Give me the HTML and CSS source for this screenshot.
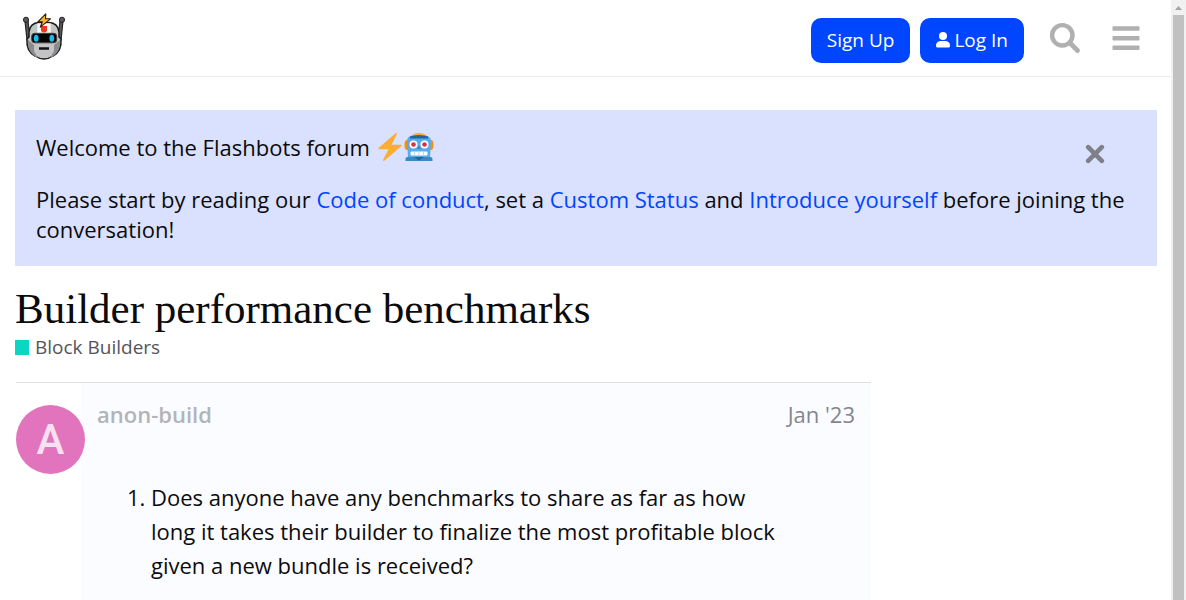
FILE: index.html
```
<!DOCTYPE html>
<html lang="en">
<head>
<meta charset="utf-8">
<meta name="viewport" content="width=device-width, initial-scale=1">
<title>Builder performance benchmarks - Flashbots</title>
<link rel="stylesheet" href="styles.css">
</head>
<body>
<div class="viewport">
  <div class="page">
    <header class="site-header">
      <a class="logo" href="#" aria-label="Flashbots home">
        <svg viewBox="0 0 44 52" width="44" height="52">
          <path d="M3 9h3l1 9 3-1v12l-3 1-2-2zM41 9h-3l-1 9-3-1v12l3 1 2-2z" fill="#5a5a5c" stroke="#222" stroke-width="1.200" stroke-linejoin="round"/>
          <circle cx="4" cy="7.800" r="2.600" fill="#5a5a5c" stroke="#222"/>
          <circle cx="40" cy="7.800" r="2.600" fill="#5a5a5c" stroke="#222"/>
          <path d="M7 20Q8 11 17 10.500h10Q36 11 37 20v5l2 2q1 12-8 17-9 6-18 0-9-5-8-17l2-2z" fill="#c4c4c6" stroke="#1c1c1c" stroke-width="1.500"/>
          <path d="M6 28l6 5v6l4 7Q5 41 6 28zM38 28l-6 5v6l-4 7q11-5 10-18z" fill="#8b8b8d"/>
          <path d="M15.300 11.300h13.400V21H15.300z" fill="#fafafa"/>
          <path d="M19 14h6v5q-3 3-6 0z" fill="#f0391b"/>
          <rect x="9.700" y="21.300" width="25" height="9.500" rx="3" fill="#050505" stroke="#444"/>
          <ellipse cx="14.200" cy="26.200" rx="2.400" ry="3.500" fill="#18bdf0"/>
          <ellipse cx="29.800" cy="26.200" rx="2.400" ry="3.500" fill="#18bdf0"/>
          <path d="M17 36.500h10" stroke="#111" stroke-width="2.500"/>
          <path d="M23.800 1.800 15.800 9.800h4.500l-2 5.400 10.200-8.400h-5z" fill="#ffb31a" stroke="#1c1c1c" stroke-width="1.100" stroke-linejoin="round"/>
        </svg>
      </a>
      <nav class="header-actions" aria-label="Account">
        <button class="btn" type="button">Sign Up</button>
        <button class="btn" type="button">
          <svg viewBox="0 0 14 16" width="14" height="16" fill="#fff" aria-hidden="true"><circle cx="7" cy="4" r="4"/><path d="M4.200 9h5.600Q14 9.500 14 13.500V14q0 1.500-1.500 1.500h-11Q0 15.500 0 14v-.5Q0 9.500 4.200 9z"/></svg>
          Log In
        </button>
        <button class="icon-btn" type="button" aria-label="Search">
          <svg viewBox="0 0 32 32" width="32" height="32" fill="none" stroke="#b0b0b0"><circle cx="13.300" cy="13.300" r="10.200" stroke-width="4.400"/><path d="m22 22 6.500 6.500" stroke-width="4.800" stroke-linecap="round"/></svg>
        </button>
        <button class="icon-btn" type="button" aria-label="Menu">
          <svg viewBox="0 0 32 32" width="32" height="32" fill="#b0b0b0"><rect x="2.500" y="4.200" width="27" height="4.600" rx="1"/><rect x="2.500" y="13.900" width="27" height="4.600" rx="1"/><rect x="2.500" y="23.500" width="27" height="4.600" rx="1"/></svg>
        </button>
      </nav>
    </header>

    <main class="content">
      <section class="banner" aria-label="Welcome">
        <button class="close" type="button" aria-label="Dismiss">
          <svg viewBox="0 0 20 20" width="20" height="20" fill="none" stroke="#7f7f87" stroke-width="4.600" stroke-linecap="round"><path d="m3.200 3.200 13.600 13.600M16.800 3.200 3.200 16.800"/></svg>
        </button>
        <p class="greeting">Welcome to the Flashbots forum <span class="emoji"><svg viewBox="0 0 36 36" width="28" height="28" role="img" aria-label="high voltage"><path fill="#FFAC33" d="M32.938 15.651C32.792 15.260 32.418 15 32 15H19.925L26.890 1.458c.219-.426.106-.947-.271-1.243C26.437.071 26.218 0 26 0c-.233 0-.466.082-.653.243L18 6.588 3.347 19.243c-.316.273-.430.714-.284 1.105S3.582 21 4 21h12.075L9.110 34.542c-.219.426-.106.947.271 1.243.182.144.401.215.619.215.233 0 .466-.082.653-.243L18 29.412l14.653-12.655c.317-.273.430-.714.285-1.106z"/></svg><svg viewBox="0 0 30 28" width="30" height="28" role="img" aria-label="robot"><ellipse cx="3" cy="12" rx="2.500" ry="5" fill="#f4900c"/><ellipse cx="27" cy="12" rx="2.500" ry="5" fill="#f4900c"/><path d="M6 5Q8 0 15 0t9 5z" fill="#ffac33"/><path d="M3 8Q3 3 9 2.500h12Q27 3 27 8l-1 16H4z" fill="#55acee"/><path d="M6 3.500q9-3 18 0v2H6z" fill="#226699"/><path d="M1.500 26q0-2 2-2h23q2 0 2 2v2h-27z" fill="#3b88c3"/><path d="m10 24 5 3.500 5-3.500z" fill="#226699"/><circle cx="9.500" cy="11.500" r="4" fill="#fff"/><circle cx="20.500" cy="11.500" r="4" fill="#fff"/><circle cx="9.500" cy="11.500" r="2.300" fill="#dd2e44"/><circle cx="20.500" cy="11.500" r="2.300" fill="#dd2e44"/><path d="m15 12 2 4h-4z" fill="#3b88c3"/><rect x="6.500" y="18.500" width="17" height="4" rx="1" fill="#fff"/><path d="M10.500 18.500v4M15 18.500v4M19.500 18.500v4" stroke="#bcd9f0"/></svg></span></p>
        <p>Please start by reading our <a href="#">Code of conduct</a>, set a <a href="#">Custom Status</a> and <a href="#">Introduce yourself</a> before joining the conversation!</p>
      </section>

      <h1 class="title">Builder performance benchmarks</h1>
      <a class="category" href="#"><span class="category-dot"></span>Block Builders</a>

      <article class="post">
        <div class="avatar">A</div>
        <div class="post-body">
          <div class="post-meta">
            <a class="author" href="#">anon-build</a>
            <a class="date" href="#">Jan '23</a>
          </div>
          <ol class="post-text">
            <li>Does anyone have any benchmarks to share as far as how long it takes their builder to finalize the most profitable block given a new bundle is received?</li>
          </ol>
        </div>
      </article>
    </main>
  </div>
  <div class="scrollbar" aria-hidden="true">
    <svg class="scroll-arrow" viewBox="0 0 15 15" width="15" height="15"><path d="M4 10 7.500 6 11 10z" fill="#a3a3a3"/></svg>
    <div class="scroll-thumb"></div>
  </div>
</div>
</body>
</html>
```
FILE: styles.css
```
* {
  box-sizing: border-box;
}

body {
  margin: 0;
  background: #fff;
  color: #0b0b0c;
  font: 22px/30px "Open Sans", "Noto Sans", sans-serif;
}

a {
  color: #0045ff;
  text-decoration: none;
}

button {
  border: 0;
  padding: 0;
  background: none;
  font: inherit;
  cursor: pointer;
}

svg {
  display: block;
}

.viewport {
  display: flex;
  height: 100vh;
  overflow: hidden;
}

.page {
  flex: 1;
  min-width: 0;
}

.site-header {
  display: flex;
  align-items: center;
  justify-content: space-between;
  padding: 12px 29px 12px 22px;
  min-height: 77px;
  border-bottom: 1px solid #ececec;
}

.header-actions {
  display: flex;
  align-items: center;
  gap: 10px;
}

.btn {
  display: flex;
  align-items: center;
  gap: 4px;
  height: 45px;
  margin-top: 4px;
  padding: 0 16px;
  border-radius: 10px;
  background: #0045ff;
  color: #fff;
  font-size: 19px;
}

.icon-btn {
  margin-left: 15px;
}

.icon-btn + .icon-btn {
  margin-left: 19px;
}

.content {
  padding: 33px 14px 0 15px;
}

.banner {
  padding: 22px 21px;
  background: #d9e1ff;
}

.banner p {
  margin: 0;
}

.banner .greeting {
  display: flex;
  align-items: center;
  gap: 6px;
  margin-bottom: 22px;
}

.close {
  float: right;
  margin: 12px 31px 0 0;
}

.emoji {
  display: flex;
}

.title {
  margin: 19px 0 0;
  font: 400 43px/47px "Source Serif Pro", "Liberation Serif", serif;
}

.category {
  display: flex;
  align-items: center;
  gap: 6px;
  color: #54545b;
  font-size: 19px;
}

.category-dot {
  width: 14px;
  height: 15px;
  background: #0bd5c3;
}

.post {
  display: flex;
  max-width: 855px;
  margin: 20px 0 0 1px;
  border-top: 1px solid #e0e0e3;
}

.avatar {
  flex: none;
  z-index: 1;
  width: 69px;
  height: 69px;
  margin: 22px -4px 0 0;
  border-radius: 50%;
  background: #e274bd;
  color: #f8e0f0;
  font: 500 42px/69px Roboto, sans-serif;
  text-align: center;
}

.post-body {
  flex: 1;
  min-height: 218px;
  padding: 16px;
  background: #fbfcff;
}

.post-meta {
  display: flex;
  justify-content: space-between;
}

.author {
  color: #b3b4b8;
  font-weight: 600;
}

.date {
  color: #85858e;
}

.post-text {
  margin: 51px 80px 0 0;
  padding-left: 54px;
  line-height: 34px;
}

.scrollbar {
  flex: none;
  width: 15px;
  display: flex;
  flex-direction: column;
  background: #f1f1f1;
}

.scroll-thumb {
  flex: 1;
  margin: 0 2px;
  background: #c1c1c1;
}
```
